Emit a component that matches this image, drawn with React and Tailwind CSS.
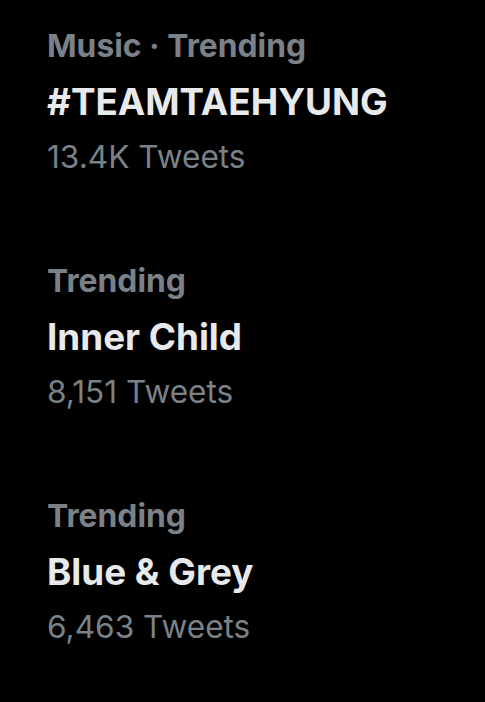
import React from "react";

const trends = [
  { label: "Music · Trending", title: "#TEAMTAEHYUNG", count: "13.4K Tweets" },
  { label: "Trending", title: "Inner Child", count: "8,151 Tweets" },
  { label: "Trending", title: "Blue & Grey", count: "6,463 Tweets" },
];

const App = () => {
  return (
    <div
      className="w-[485px] h-[702px] bg-black overflow-hidden pl-[47px] pt-[25px]"
      style={{ fontFamily: "Inter, Roboto, sans-serif" }}
    >
      <div className="flex flex-col gap-[83px]">
        {trends.map((t) => (
          <div key={t.title} className="flex flex-col">
            <span className="text-[31.8px] leading-[42px] font-bold text-[#7a8187]">
              {t.label}
            </span>
            <span className="mt-[12px] text-[36.8px] leading-[46px] font-bold text-[#e7e9ea]">
              {t.title}
            </span>
            <span className="mt-[12px] text-[31.6px] leading-[40px] text-[#7a8187]">
              {t.count}
            </span>
          </div>
        ))}
      </div>
    </div>
  );
};

export default App;
